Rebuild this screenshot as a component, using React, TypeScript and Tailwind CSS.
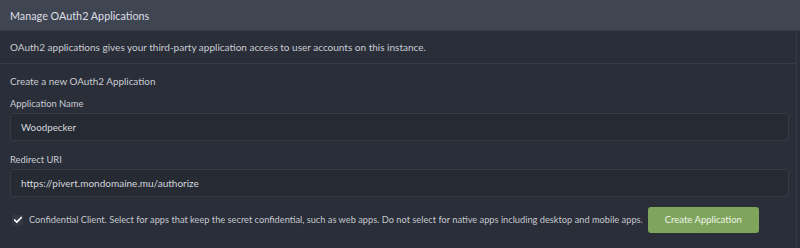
import { Check } from 'lucide-react';

export default function App() {
  return (
    <div className="w-[800px] h-[248px] bg-[#2a2e39] text-[#c9ccd3] font-['Lato',sans-serif] overflow-hidden">
      {/* Header */}
      <div className="h-[31px] bg-[#404552] border-b border-[#353945] flex items-center pt-[2px] px-[10px] text-[10.8px] text-[#dcdfe5]">
        Manage OAuth2 Applications
      </div>

      <div className="border-r border-[#343845] mr-[3px]">
        {/* Description */}
        <div className="h-[33px] flex items-center pt-[1px] px-[10px] border-b border-[#373b47] text-[10px]">
          OAuth2 applications gives your third-party application access to user accounts on this instance.
        </div>

        {/* Form */}
        <div className="px-[10px] pt-[9px] pb-[16px]">
          <div className="h-[16px] flex items-center text-[9.9px]">Create a new OAuth2 Application</div>

          <div className="mt-[7px] h-[16px] flex items-center text-[9.4px]">Application Name</div>
          <div className="mt-[1px] h-[28px] w-[779px] bg-[#262a33] border border-[#353a45] rounded-[3px] flex items-center px-[10px] text-[9.8px] text-[#d4d7dd]">
            Woodpecker
          </div>

          <div className="mt-[11px] h-[16px] flex items-center text-[9.4px]">Redirect URI</div>
          <div className="mt-[1px] h-[28px] w-[779px] bg-[#262a33] border border-[#353a45] rounded-[3px] flex items-center px-[10px] text-[10px] text-[#d4d7dd]">
            https://pivert.mondomaine.mu/authorize
          </div>

          <div className="mt-[10px] flex items-center h-[26px]">
            <div className="w-[11px] h-[11px] rounded-[2px] bg-[#343845] flex items-center justify-center ml-[2px]">
              <Check size={10} strokeWidth={4} className="text-white" />
            </div>
            <span className="ml-[6px] text-[9.25px] whitespace-nowrap text-[#c4c7ce]">
              Confidential Client. Select for apps that keep the secret confidential, such as web apps. Do not select for native apps including desktop and mobile apps.
            </span>
            <button className="ml-[5px] h-[26px] w-[111px] rounded-[3px] bg-[#7ea55b] text-[#eef3ea] text-[9.5px] whitespace-nowrap">
              Create Application
            </button>
          </div>
        </div>
      </div>
    </div>
  );
}
